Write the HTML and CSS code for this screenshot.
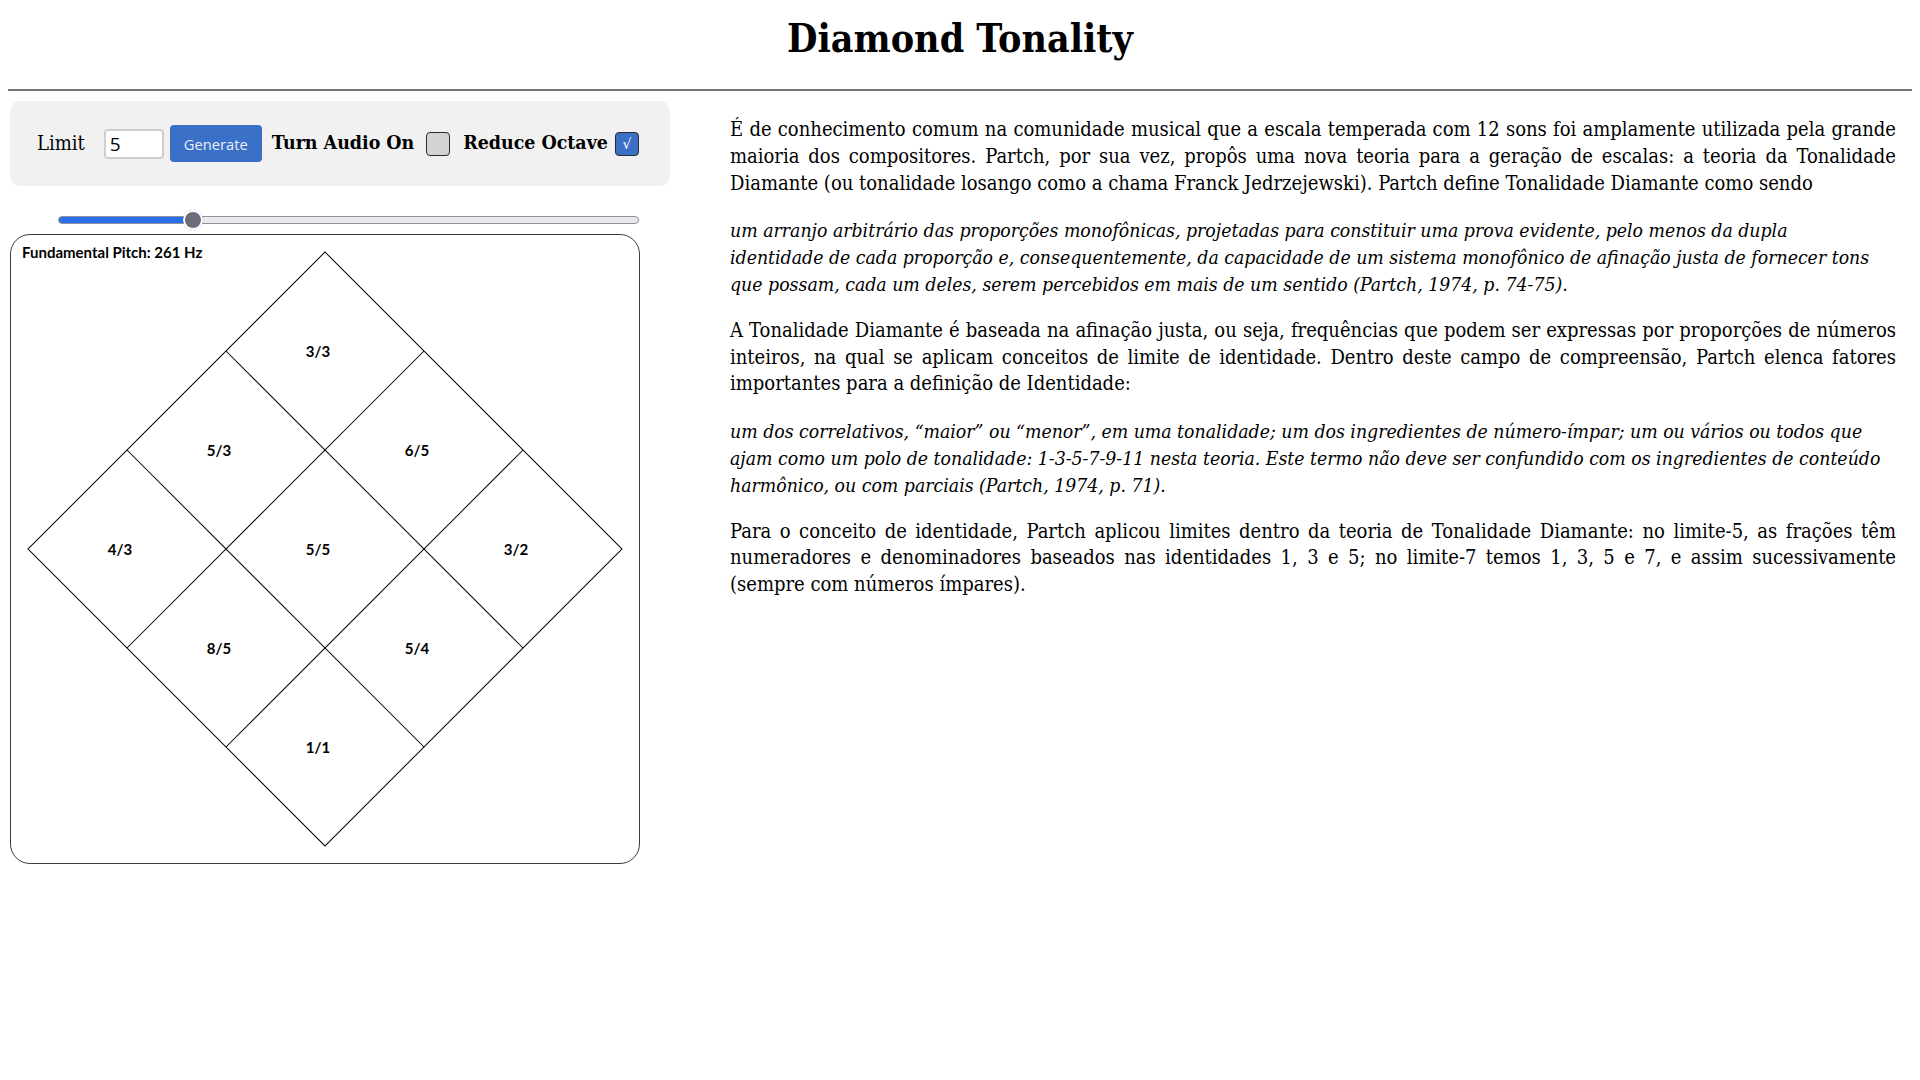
FILE: index.html
```html
<!DOCTYPE html>
<html lang="pt">
<head>
<meta charset="utf-8">
<title>Diamond Tonality</title>
<link rel="stylesheet" href="styles.css">
</head>
<body>
<h1 class="title">Diamond Tonality</h1>
<hr class="rule">
<main class="layout">
  <section class="left">
    <div class="controls">
      <label class="limit-label" for="limit">Limit</label>
      <input id="limit" class="limit-input" type="text" value="5">
      <button class="btn" type="button">Generate</button>
      <span class="check-label">Turn Audio On</span>
      <span class="checkbox"></span>
      <span class="check-label last">Reduce Octave</span>
      <span class="checkbox checked">&#8730;</span>
    </div>
    <input class="slider" type="range" min="50" max="1000" value="261" style="--fill: 23.1%">
    <div class="canvas">
      <svg class="diagram" viewBox="0 0 628 628" width="628" height="628">
        <text class="pitch" x="11" y="22.7">Fundamental Pitch: 261 Hz</text>
        <g transform="translate(314 314) rotate(45)" class="grid">
          <rect x="-210" y="-210" width="420" height="420"/>
          <line x1="-70" y1="-210" x2="-70" y2="210"/>
          <line x1="70" y1="-210" x2="70" y2="210"/>
          <line x1="-210" y1="-70" x2="210" y2="-70"/>
          <line x1="-210" y1="70" x2="210" y2="70"/>
        </g>
        <g class="labels">
          <text x="307" y="122">3/3</text>
          <text x="208" y="221">5/3</text>
          <text x="406" y="221">6/5</text>
          <text x="109" y="320">4/3</text>
          <text x="307" y="320">5/5</text>
          <text x="505" y="320">3/2</text>
          <text x="208" y="419">8/5</text>
          <text x="406" y="419">5/4</text>
          <text x="307" y="518">1/1</text>
        </g>
      </svg>
    </div>
  </section>
  <article class="text">
    <p>É de conhecimento comum na comunidade musical que a escala temperada com 12 sons foi amplamente utilizada pela grande maioria dos compositores. Partch, por sua vez, propôs uma nova teoria para a geração de escalas: a teoria da Tonalidade Diamante (ou tonalidade losango como a chama Franck Jedrzejewski). Partch define Tonalidade Diamante como sendo</p>
    <p class="quote">um arranjo arbitrário das proporções monofônicas, projetadas para constituir uma prova evidente, pelo menos da dupla identidade de cada proporção e, consequentemente, da capacidade de um sistema monofônico de afinação justa de fornecer tons que possam, cada um deles, serem percebidos em mais de um sentido (Partch, 1974, p. 74-75).</p>
    <p>A Tonalidade Diamante é baseada na afinação justa, ou seja, frequências que podem ser expressas por proporções de números inteiros, na qual se aplicam conceitos de limite de identidade. Dentro deste campo de compreensão, Partch elenca fatores importantes para a definição de Identidade:</p>
    <p class="quote">um dos correlativos, “maior” ou “menor”, em uma tonalidade; um dos ingredientes de número-ímpar; um ou vários ou todos que ajam como um polo de tonalidade: 1-3-5-7-9-11 nesta teoria. Este termo não deve ser confundido com os ingredientes de conteúdo harmônico, ou com parciais (Partch, 1974, p. 71).</p>
    <p>Para o conceito de identidade, Partch aplicou limites dentro da teoria de Tonalidade Diamante: no limite-5, as frações têm numeradores e denominadores baseados nas identidades 1, 3 e 5; no limite-7 temos 1, 3, 5 e 7, e assim sucessivamente (sempre com números ímpares).</p>
  </article>
</main>
</body>
</html>
```
FILE: styles.css
```css
html, body {
  background: #ffffff;
}

body {
  margin: 8px;
  font-family: "DejaVu Serif Condensed", "DejaVu Serif", "Liberation Serif", serif;
  font-size: 20px;
  color: #000000;
}

.title {
  margin: 6px 0 0;
  font-size: 39px;
  line-height: 48px;
  font-weight: bold;
  text-align: center;
}

.rule {
  height: 0;
  margin: 27px 0 0;
  border: 0;
  border-top: 2px solid #767676;
}

.layout {
  display: flex;
  align-items: flex-start;
  margin-top: 10px;
}

.left {
  flex: none;
  width: 660px;
  margin-left: 2px;
}

.controls {
  display: flex;
  align-items: center;
  box-sizing: border-box;
  height: 85px;
  padding-left: 27px;
  background: #f1f1f1;
  border-radius: 10px;
  white-space: nowrap;
}

.limit-label {
  font-size: 20px;
  margin-right: 19px;
  position: relative;
  top: -1px;
}

.limit-input {
  box-sizing: border-box;
  width: 60px;
  height: 30px;
  margin: 0 6px 0 0;
  padding: 0 0 0 4px;
  border: 2px solid #cfcfcf;
  border-radius: 4px;
  background: #ffffff;
  font-family: "Open Sans", "Noto Sans", sans-serif;
  font-size: 19px;
  color: #000000;
  outline: none;
}

.btn {
  box-sizing: border-box;
  width: 92px;
  height: 37px;
  margin: 0 10px 0 0;
  padding: 0;
  border: 0;
  border-radius: 4px;
  background: #3a70c7;
  color: #e9eef7;
  font-family: "Open Sans", "Noto Sans", sans-serif;
  font-size: 14.7px;
}

.check-label {
  font-size: 19.4px;
  font-weight: bold;
  margin-right: 12px;
  position: relative;
  top: -1px;
}

.check-label.last {
  margin-right: 7px;
}

.checkbox {
  box-sizing: border-box;
  width: 24px;
  height: 24px;
  margin-right: 13px;
  border: 1px solid #2b2b2b;
  border-radius: 4px;
  background: #d3d3d3;
  display: flex;
  align-items: center;
  justify-content: center;
  font-family: "DejaVu Sans", sans-serif;
  font-size: 14px;
  color: #ffffff;
}

.checkbox.checked {
  background: #3a6fc6;
}

.slider {
  -webkit-appearance: none;
  appearance: none;
  display: block;
  box-sizing: border-box;
  width: 581px;
  height: 8px;
  margin: 30px 0 0 48px;
  padding: 0;
  border: 1px solid #8f8f9d;
  border-radius: 4px;
  background: linear-gradient(to right, #2b6fe9 0, #2b6fe9 var(--fill), #e9e9ed var(--fill), #e9e9ed 100%);
  outline: none;
}

.slider::-webkit-slider-thumb {
  -webkit-appearance: none;
  appearance: none;
  box-sizing: border-box;
  width: 20px;
  height: 20px;
  border-radius: 50%;
  border: 2px solid #ffffff;
  background: #6b6b79;
  box-shadow: 0 0 1px rgba(0, 0, 0, 0.4);
}

.canvas {
  box-sizing: border-box;
  width: 630px;
  height: 630px;
  margin-top: 10px;
  border: 1px solid #3c3c3c;
  border-radius: 20px;
  overflow: hidden;
}

.diagram {
  display: block;
}

.grid rect,
.grid line {
  fill: none;
  stroke: #000000;
  stroke-width: 1;
}

.pitch {
  font-family: Lato, "Open Sans", sans-serif;
  font-weight: bold;
  font-size: 15px;
  fill: #000000;
}

.labels text {
  font-family: Lato, "Open Sans", sans-serif;
  font-weight: bold;
  font-size: 15px;
  text-anchor: middle;
  fill: #000000;
}

.text {
  flex: 1;
  min-width: 0;
  margin: 0 16px 0 60px;
  padding-top: 15px;
  line-height: 26.8px;
}

.text p {
  margin: 0 0 20px;
  text-align: justify;
}

.text p.quote {
  margin-right: 12px;
  padding-top: 2px;
  margin-bottom: 18px;
  font-size: 19.3px;
  font-style: italic;
  text-align: left;
}
```
